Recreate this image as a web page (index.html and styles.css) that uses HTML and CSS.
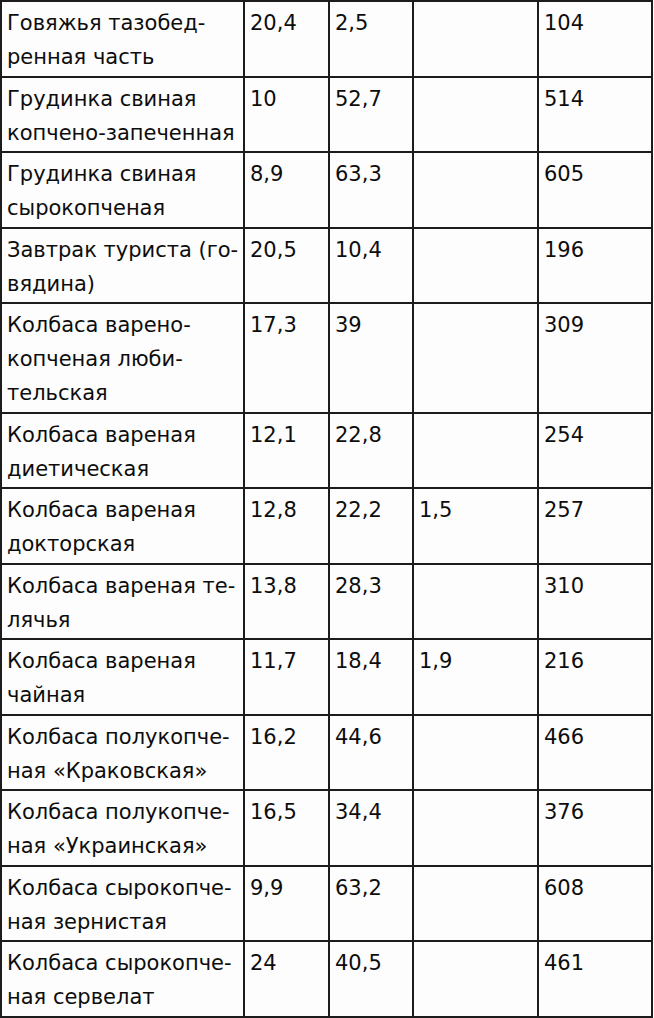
FILE: index.html
```html
<!DOCTYPE html>
<html lang="ru">
<head>
<meta charset="utf-8">
<link rel="stylesheet" href="styles.css">
</head>
<body>
<table class="food">
  <colgroup>
    <col class="c-name"><col class="c-n1"><col class="c-n2"><col class="c-n3"><col class="c-n4">
  </colgroup>
  <tbody>
    <tr><td>Говяжья тазобед-<br>ренная часть</td><td>20,4</td><td>2,5</td><td></td><td>104</td></tr>
    <tr><td>Грудинка свиная<br>копчено-запеченная</td><td>10</td><td>52,7</td><td></td><td>514</td></tr>
    <tr><td>Грудинка свиная<br>сырокопченая</td><td>8,9</td><td>63,3</td><td></td><td>605</td></tr>
    <tr><td>Завтрак туриста (го-<br>вядина)</td><td>20,5</td><td>10,4</td><td></td><td>196</td></tr>
    <tr><td>Колбаса варено-<br>копченая люби-<br>тельская</td><td>17,3</td><td>39</td><td></td><td>309</td></tr>
    <tr><td>Колбаса вареная<br>диетическая</td><td>12,1</td><td>22,8</td><td></td><td>254</td></tr>
    <tr><td>Колбаса вареная<br>докторская</td><td>12,8</td><td>22,2</td><td>1,5</td><td>257</td></tr>
    <tr><td>Колбаса вареная те-<br>лячья</td><td>13,8</td><td>28,3</td><td></td><td>310</td></tr>
    <tr><td>Колбаса вареная<br>чайная</td><td>11,7</td><td>18,4</td><td>1,9</td><td>216</td></tr>
    <tr><td>Колбаса полукопче-<br>ная «Краковская»</td><td>16,2</td><td>44,6</td><td></td><td>466</td></tr>
    <tr><td>Колбаса полукопче-<br>ная «Украинская»</td><td>16,5</td><td>34,4</td><td></td><td>376</td></tr>
    <tr><td>Колбаса сырокопче-<br>ная зернистая</td><td>9,9</td><td>63,2</td><td></td><td>608</td></tr>
    <tr><td>Колбаса сырокопче-<br>ная сервелат</td><td>24</td><td>40,5</td><td></td><td>461</td></tr>
  </tbody>
</table>
</body>
</html>
```

FILE: styles.css
```css
html, body {
  margin: 0;
  padding: 0;
  background: #fdfdfd;
}

.food {
  border-collapse: collapse;
  table-layout: fixed;
  width: 653px;
  font-family: "DejaVu Sans", sans-serif;
  font-size: 21px;
  line-height: 34px;
  color: #0d0d0d;
}

.c-name { width: 243px; }
.c-n1 { width: 85px; }
.c-n2 { width: 84px; }
.c-n3 { width: 125px; }
.c-n4 { width: 114px; }

.food td {
  border: 2px solid #1c1c1c;
  padding: 4px 5px 1.5px 5px;
  vertical-align: top;
  white-space: nowrap;
  overflow: hidden;
}
```
